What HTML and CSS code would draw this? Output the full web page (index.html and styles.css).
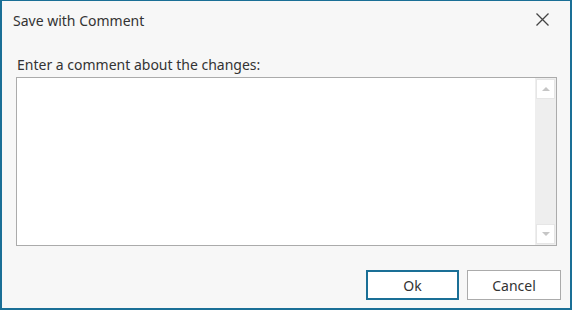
FILE: index.html
```html
<!DOCTYPE html>
<html lang="en">
<head>
    <meta charset="UTF-8">
    <title>Save with Comment</title>
    <link rel="stylesheet" href="styles.css">
</head>
<body>
    <div class="dialog">
        <div class="header">
            <span class="title">Save with Comment</span>
            <button class="close" aria-label="Close">
                <svg width="13" height="13" viewBox="0 0 13 13">
                    <path d="M0.5 0.5 L12.5 12.5 M12.5 0.5 L0.5 12.5" stroke="#444" stroke-width="1.3" fill="none"/>
                </svg>
            </button>
        </div>
        <div class="content">
            <label for="comment">Enter a comment about the changes:</label>
            <div class="comment-box">
                <textarea id="comment"></textarea>
                <div class="scrollbar">
                    <div class="scroll-btn"><span class="arrow-up"></span></div>
                    <div class="scroll-btn"><span class="arrow-down"></span></div>
                </div>
            </div>
        </div>
        <div class="footer">
            <button class="btn btn-ok">Ok</button>
            <button class="btn">Cancel</button>
        </div>
    </div>
</body>
</html>
```

FILE: styles.css
```css
body {
    margin: 0;
    font-family: "Noto Sans", "Open Sans", sans-serif;
    color: #333;
}
.dialog {
    width: 572px;
    height: 310px;
    box-sizing: border-box;
    background: #f7f7f7;
    border: 2px solid #1a6f96;
    border-top-width: 1px;
    display: flex;
    flex-direction: column;
}
.header {
    display: flex;
    justify-content: space-between;
    align-items: flex-start;
    padding: 10px 21px 0 11px;
    height: 45px;
    box-sizing: border-box;
}
.title {
    font-size: 14px;
    line-height: 20px;
}
.close {
    border: none;
    background: none;
    padding: 0;
    margin-top: 2px;
    width: 13px;
    height: 13px;
    display: flex;
}
.content {
    padding: 0 13px 0 14px;
}
label {
    display: block;
    font-size: 14px;
    line-height: 20px;
    margin: 9px 0 2px 1px;
}
.comment-box {
    display: flex;
    height: 169px;
    box-sizing: border-box;
    border: 1px solid #ababab;
    background: #fff;
}
textarea {
    flex: 1;
    border: none;
    outline: none;
    resize: none;
    padding: 2px 4px;
    font-family: inherit;
    font-size: 14px;
}
.scrollbar {
    width: 21px;
    box-sizing: border-box;
    padding: 1px;
    background: #eeeeee;
    display: flex;
    flex-direction: column;
    justify-content: space-between;
}
.scroll-btn {
    height: 20px;
    box-sizing: border-box;
    background: #fff;
    border: 1px solid #e6e6e6;
    display: flex;
    align-items: center;
    justify-content: center;
}
.arrow-up {
    border-left: 4px solid transparent;
    border-right: 4px solid transparent;
    border-bottom: 4px solid #c6c6c6;
}
.arrow-down {
    border-left: 4px solid transparent;
    border-right: 4px solid transparent;
    border-top: 4px solid #c6c6c6;
}
.footer {
    display: flex;
    justify-content: flex-end;
    gap: 8px;
    padding: 24px 9px 0 0;
}
.btn {
    width: 94px;
    height: 30px;
    box-sizing: border-box;
    background: #fff;
    border: 1px solid #ababab;
    font-family: inherit;
    font-size: 14px;
    color: #333;
    padding: 0;
}
.btn-ok {
    width: 93px;
    border: 2px solid #1a6f96;
}
```
